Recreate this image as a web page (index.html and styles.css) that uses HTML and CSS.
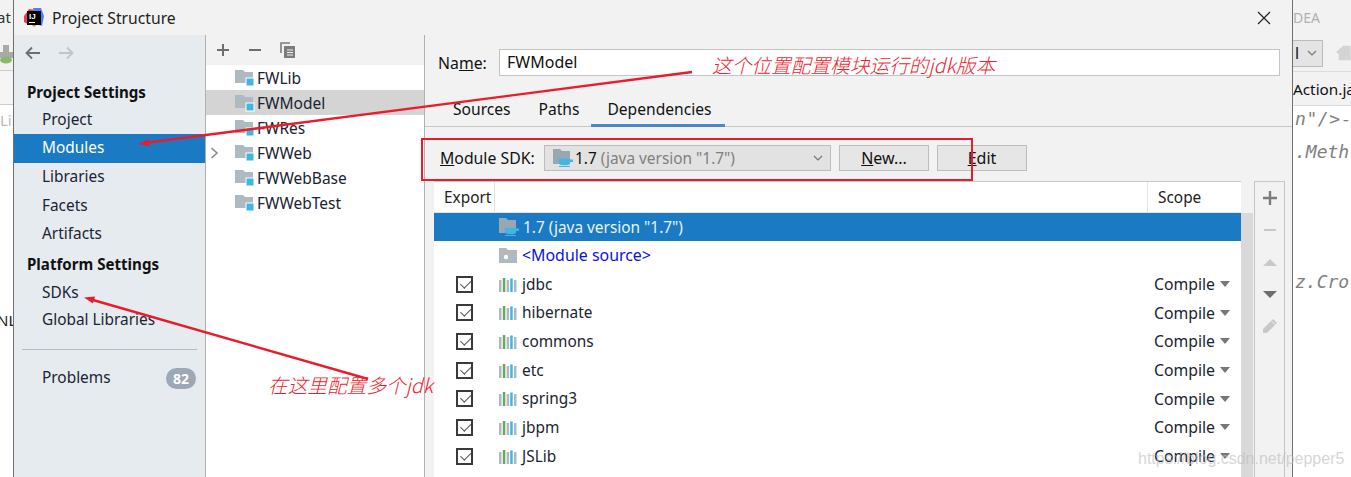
FILE: index.html
```html
<!DOCTYPE html>
<html lang="en">
<head>
<meta charset="utf-8">
<title>Project Structure</title>
<link rel="stylesheet" href="styles.css">
</head>
<body>
<svg class="defs" width="0" height="0">
  <symbol id="module" viewBox="0 0 20 18"><path d="M0 1h8l2 2h8v11H0z" fill="#aeb9c0"/><rect x="11" y="9" width="8" height="8" fill="#40b6e0" stroke="#fff"/></symbol>
  <symbol id="sdk" viewBox="0 0 20 18"><path d="M0 0h7l2 2h8v13H0z" fill="#9aa7b0"/><path d="M6 10h11v3a3 3 0 0 1-3 3h-5a3 3 0 0 1-3-3z" fill="#40b6e0" stroke="#40b6e0" stroke-width=".5"/><path d="M17 10.500h3v2.500h-3z" fill="#40b6e0"/><path d="M6 17.500h11" stroke="#40b6e0"/></symbol>
  <symbol id="src" viewBox="0 0 18 15"><path d="M0 0h7l2 2h9v13H0z" fill="#aeb9c0"/><circle cx="7" cy="9" r="2.200" fill="#fff"/></symbol>
  <symbol id="lib" viewBox="0 0 18 15"><path d="M0 3h2.500v12H0z" fill="#aeb9c0"/><path d="M3.800 1h2.500v14H3.800z" fill="#6ba65f"/><path d="M7.600 3h2.500v12H7.600z" fill="#aeb9c0"/><path d="M11.200 1.500h2.500V15h-2.500z" fill="#40b6e0"/><path d="M15 3h2.500v12H15z" fill="#aeb9c0"/></symbol>
</svg>

<div class="screen">
  <aside class="bg bg-left">
    <div class="bg-title">at</div>
    <div class="bg-tool">
      <svg width="13" height="22" viewBox="0 0 13 22"><path d="M3 2h6v7h4v6H0V9h3z" fill="#a9a9a9"/><ellipse cx="6" cy="17" rx="6" ry="3.500" fill="#8bb96a"/></svg>
    </div>
    <div class="bg-tabs"></div>
    <div class="bg-lib">Lib</div>
    <div class="bg-nl">NL</div>
  </aside>

  <section class="dialog">
    <header class="titlebar">
      <svg class="logo" width="20" height="20" viewBox="0 0 20 20">
        <path d="M0 8 5 1l7 1-3 8-4 7-5-3z" fill="#f0384f"/>
        <path d="M9 0h8l3 8-2 10-6-2z" fill="#4f7ff0"/>
        <path d="M2 12l8 7 4-3z" fill="#f28a30"/>
        <rect x="3" y="3" width="14" height="14" fill="#000"/>
        <rect x="5" y="14" width="6" height="1" fill="#fff"/>
        <text x="5" y="11" class="logo-text">IJ</text>
      </svg>
      <span class="title">Project Structure</span>
      <svg class="close" width="14" height="14" viewBox="0 0 14 14"><path d="M1 1l12 12M13 1 1 13" stroke="#222" stroke-width="1.200"/></svg>
    </header>

    <div class="body">
      <nav class="sidebar">
        <div class="nav-arrows">
          <svg width="16" height="14" viewBox="0 0 16 14"><path d="M15 7H2M7 1.500 1.500 7 7 12.500" fill="none" stroke="#6e6e6e" stroke-width="1.800"/></svg>
          <svg width="16" height="14" viewBox="0 0 16 14"><path d="M1 7h13M9 1.500 14.500 7 9 12.500" fill="none" stroke="#c4c4c4" stroke-width="1.800"/></svg>
        </div>
        <div class="nav-head">Project Settings</div>
        <div class="nav-item">Project</div>
        <div class="nav-item active">Modules</div>
        <div class="nav-item">Libraries</div>
        <div class="nav-item">Facets</div>
        <div class="nav-item">Artifacts</div>
        <div class="nav-head second">Platform Settings</div>
        <div class="nav-item">SDKs</div>
        <div class="nav-item tight">Global Libraries</div>
        <div class="nav-sep"></div>
        <div class="nav-item problems">Problems<span class="badge">82</span></div>
      </nav>

      <div class="modules">
        <div class="mod-tools">
          <svg width="14" height="14" viewBox="0 0 14 14"><path d="M7 1v12M1 7h12" stroke="#6e6e6e" stroke-width="2"/></svg>
          <svg width="14" height="14" viewBox="0 0 14 14"><path d="M1 7h12" stroke="#6e6e6e" stroke-width="2"/></svg>
          <svg width="16" height="17" viewBox="0 0 16 17"><path d="M1 11V1h9" fill="none" stroke="#7c7c7c" stroke-width="1.600"/><path d="M4 4h11v12H4z" fill="#7c7c7c"/><path d="M7 8h6M7 10.500h6M7 13h6" stroke="#f2f2f2"/></svg>
        </div>
        <ul class="mod-list">
          <li class="mod"><svg class="mod-ic" width="20" height="18"><use href="#module"/></svg>FWLib</li>
          <li class="mod selected"><svg class="mod-ic" width="20" height="18"><use href="#module"/></svg>FWModel</li>
          <li class="mod"><svg class="mod-ic" width="20" height="18"><use href="#module"/></svg>FWRes</li>
          <li class="mod"><svg class="chev" width="9" height="12" viewBox="0 0 9 12"><path d="M1.500 1 7 6l-5.500 5" fill="none" stroke="#8a8a8a" stroke-width="1.600"/></svg><svg class="mod-ic" width="20" height="18"><use href="#module"/></svg>FWWeb</li>
          <li class="mod"><svg class="mod-ic" width="20" height="18"><use href="#module"/></svg>FWWebBase</li>
          <li class="mod"><svg class="mod-ic" width="20" height="18"><use href="#module"/></svg>FWWebTest</li>
        </ul>
      </div>

      <main class="main">
        <div class="name-row">
          <label class="name-label">Na<u>m</u>e:</label>
          <div class="name-input">FWModel</div>
        </div>
        <div class="tabs">
          <span class="tab">Sources</span>
          <span class="tab">Paths</span>
          <span class="tab current">Dependencies</span>
        </div>
        <div class="sdk-row">
          <span class="sdk-label"><u>M</u>odule SDK:</span>
          <div class="combo">
            <svg width="20" height="18"><use href="#sdk"/></svg>
            <span>1.7 <span class="muted">(java version "1.7")</span></span>
            <svg class="combo-arrow" width="10" height="6" viewBox="0 0 10 6"><path d="M1 1l4 4 4-4" fill="none" stroke="#777" stroke-width="1.200"/></svg>
          </div>
          <button class="btn"><u>N</u>ew...</button>
          <button class="btn"><u>E</u>dit</button>
        </div>
        <div class="table-wrap">
          <div class="table">
            <div class="thead">
              <span class="th-export">Export</span>
              <span class="th-scope">Scope</span>
            </div>
            <div class="rows">
              <div class="row sel"><span class="check-cell"></span><svg class="row-ic" width="20" height="18"><use href="#sdk"/></svg>1.7 (java version "1.7")</div>
              <div class="row source"><span class="check-cell"></span><svg class="row-ic small" width="18" height="15"><use href="#src"/></svg>&lt;Module source&gt;</div>
              <div class="row"><span class="check-cell"><span class="check"></span></span><svg class="row-ic small" width="18" height="15"><use href="#lib"/></svg><span class="dep">jdbc</span><span class="scope">Compile</span><i class="tri"></i></div>
              <div class="row"><span class="check-cell"><span class="check"></span></span><svg class="row-ic small" width="18" height="15"><use href="#lib"/></svg><span class="dep">hibernate</span><span class="scope">Compile</span><i class="tri"></i></div>
              <div class="row"><span class="check-cell"><span class="check"></span></span><svg class="row-ic small" width="18" height="15"><use href="#lib"/></svg><span class="dep">commons</span><span class="scope">Compile</span><i class="tri"></i></div>
              <div class="row"><span class="check-cell"><span class="check"></span></span><svg class="row-ic small" width="18" height="15"><use href="#lib"/></svg><span class="dep">etc</span><span class="scope">Compile</span><i class="tri"></i></div>
              <div class="row"><span class="check-cell"><span class="check"></span></span><svg class="row-ic small" width="18" height="15"><use href="#lib"/></svg><span class="dep">spring3</span><span class="scope">Compile</span><i class="tri"></i></div>
              <div class="row"><span class="check-cell"><span class="check"></span></span><svg class="row-ic small" width="18" height="15"><use href="#lib"/></svg><span class="dep">jbpm</span><span class="scope">Compile</span><i class="tri"></i></div>
              <div class="row"><span class="check-cell"><span class="check"></span></span><svg class="row-ic small" width="18" height="15"><use href="#lib"/></svg><span class="dep">JSLib</span><span class="scope">Compile</span><i class="tri"></i></div>
            </div>
          </div>
          <div class="scrollbar"><div class="thumb"></div></div>
          <div class="side-tools">
            <svg width="16" height="16" viewBox="0 0 16 16"><path d="M8 1v14M1 8h14" stroke="#7c7c7c" stroke-width="2.400"/></svg>
            <svg width="16" height="16" viewBox="0 0 16 16"><path d="M2 8h12" stroke="#c8c8c8" stroke-width="2"/></svg>
            <svg width="16" height="16" viewBox="0 0 16 16"><path d="M1 12 8 5l7 7z" fill="#c8c8c8"/></svg>
            <svg width="16" height="16" viewBox="0 0 16 16"><path d="M1 5h14l-7 7z" fill="#6e6e6e"/></svg>
            <svg width="16" height="16" viewBox="0 0 16 16"><path d="M1 15v-4L11 1l4 4L5 15z" fill="#c8c8c8"/><path d="M9.500 3l4 4" stroke="#f2f2f2"/></svg>
          </div>
        </div>
      </main>
    </div>
  </section>

  <aside class="bg bg-right">
    <div class="bg-idea">DEA</div>
    <div class="bg-combo-row">
      <div class="bg-combo"><span>l</span><svg width="10" height="6" viewBox="0 0 10 6"><path d="M1 1l4 4 4-4" fill="none" stroke="#777" stroke-width="1.200"/></svg></div>
      <svg width="16" height="18" viewBox="0 0 16 18"><path d="M0 8 8 1h8v16H3V10z" fill="#d4d4d4"/></svg>
    </div>
    <div class="bg-tab">Action.ja</div>
    <div class="bg-code c1">n"/&gt;-</div>
    <div class="bg-code c2">.Meth</div>
    <div class="bg-code c3">z.Cro</div>
  </aside>

  <svg class="annot" width="1351" height="477" viewBox="0 0 1351 477">
    <rect x="422" y="139" width="550" height="41" fill="none" stroke="#ea1c2c" stroke-width="2"/>
    <path d="M692 72 148 142.500" stroke="#ea1c2c" stroke-width="2.400"/>
    <path d="M138 144l11-5 .8 7z" fill="#ea1c2c"/>
    <path d="M368 379 93 300" stroke="#ea1c2c" stroke-width="2.400"/>
    <path d="M84 297.500l11-1-2 7z" fill="#ea1c2c"/>
  </svg>
  <div class="note note-a">这个位置配置模块运行的jdk版本</div>
  <div class="note note-b">在这里配置多个jdk</div>
  <div class="watermark">https://blog.csdn.net/pepper5</div>
</div>
</body>
</html>
```
FILE: styles.css
```css
* { box-sizing: border-box; }
html, body { margin: 0; padding: 0; }
body {
  width: 1351px;
  height: 477px;
  overflow: hidden;
  background: #fff;
  font-family: "Noto Sans", "Open Sans", sans-serif;
  font-size: 15.800px;
  color: #111;
}
.defs { position: absolute; }
.screen {
  position: relative;
  display: flex;
  width: 1351px;
  height: 477px;
  overflow: hidden;
}

/* Windows behind the dialog */
.bg { overflow: hidden; background: #fff; white-space: nowrap; }
.bg-left { width: 13px; flex: none; font-size: 15px; }
.bg-title { height: 35px; background: #f2f2f2; line-height: 34px; text-indent: -3px; color: #333; }
.bg-tool { height: 36px; background: #f2f2f2; border-bottom: 1px solid #ccc; padding-top: 8px; }
.bg-tool svg { display: block; }
.bg-tabs { height: 34px; background: #f5f5f5; border-bottom: 1px solid #ccc; }
.bg-lib { height: 35px; color: #bbb; line-height: 30px; }
.bg-nl { margin-top: 170px; color: #222; text-indent: -3px; line-height: 20px; }

.bg-right { width: 58px; flex: none; }
.bg-idea { height: 35px; background: #f2f2f2; color: #b0b0b0; font-size: 14px; line-height: 36px; }
.bg-combo-row { height: 37px; background: #f2f2f2; border-bottom: 1px solid #ddd; display: flex; align-items: center; gap: 13px; }
.bg-combo { width: 33px; height: 27px; background: #e4e4e4; border: 1px solid #bbb; border-left: 0; display: flex; align-items: center; gap: 8px; padding-left: 2px; }
.bg-tab { height: 34px; background: #f2f2f2; border-bottom: 1px solid #ddd; line-height: 34px; font-size: 15.300px; }
.bg-code { font-family: "DejaVu Sans Mono", monospace; font-style: italic; color: #808080; font-size: 18px; line-height: 24px; padding-left: 2px; }
.c1 { margin-top: 1px; letter-spacing: .6px; }
.c2 { margin-top: 9px; }
.c3 { margin-top: 106px; }

/* Dialog */
.dialog {
  width: 1280px;
  flex: none;
  display: flex;
  flex-direction: column;
  background: #f2f2f2;
  border-left: 1px solid #6f6f6f;
  border-right: 1px solid #6f6f6f;
}
.titlebar { height: 35px; flex: none; display: flex; align-items: center; padding-left: 10px; }
.logo { flex: none; }
.logo-text { font-size: 8px; font-weight: 700; fill: #fff; font-family: "Liberation Sans", sans-serif; }
.title { margin-left: 8px; font-size: 15.700px; color: #222; }
.close { margin-left: auto; margin-right: 21px; }
.body { flex: 1; display: flex; min-height: 0; }

.sidebar {
  width: 192px;
  flex: none;
  background: #e6ebf0;
  border-right: 1px solid #b0b0b0;
  font-size: 15.400px;
}
.nav-arrows { height: 35px; display: flex; align-items: center; gap: 17px; padding: 0 0 0 11px; margin-bottom: 8px; }
.nav-head { height: 28px; line-height: 28px; padding-left: 13px; font-weight: 700; font-size: 15.100px; color: #111; }
.nav-head.second { margin-top: 1px; height: 29px; }
.nav-item { height: 28.700px; line-height: 28px; padding-left: 28px; color: #1a2330; }
.nav-head + .nav-item { height: 28px; }
.nav-item.tight { height: 27px; line-height: 25px; }
.nav-item.active { height: 29px; background: #1a7bc4; color: #fff; }
.nav-sep { height: 1px; margin: 15px 8px 14px 8px; background: #b8bcc0; }
.problems { display: flex; justify-content: space-between; align-items: center; padding-right: 9px; }
.badge { width: 30px; height: 21px; border-radius: 11px; background: #9ca8b5; color: #fff; font-weight: 700; font-size: 14px; line-height: 21px; text-align: center; }

.modules { width: 219px; flex: none; display: flex; flex-direction: column; background: #fff; border-right: 1px solid #b0b0b0; font-size: 15.500px; }
.mod-tools { height: 30px; flex: none; background: #f2f2f2; display: flex; align-items: center; padding: 0 0 0 10px; gap: 18px; }
.mod-list { list-style: none; margin: 0; padding: 0; }
.mod { position: relative; height: 25px; line-height: 24px; padding-left: 29px; display: flex; align-items: center; color: #1a2330; }
.mod.selected { background: #d4d4d4; }
.mod-ic { margin-right: 2px; flex: none; }
.chev { position: absolute; left: 4px; top: 7px; }

.main { flex: 1; min-width: 0; display: flex; flex-direction: column; }
.name-row { height: 41px; flex: none; display: flex; align-items: center; padding: 14px 12px 0 13px; margin-bottom: 21px; }
.name-label { width: 61px; flex: none; }
.name-input { flex: 1; height: 27px; background: #fff; border: 1px solid #c4c4c4; font-size: 16px; line-height: 24px; padding-left: 7px; }
.tabs { height: 31px; flex: none; display: flex; border-bottom: 1px solid #c8c8c8; padding-left: 14px; margin-top: -1px; }
.tab { padding: 0 14px; line-height: 26px; height: 31px; font-size: 15.600px; }
.tab.current { border-bottom: 3px solid #4a88c7; padding: 0 14px 0 16px; margin-left: -2px; }
.sdk-row { height: 54px; flex: none; display: flex; align-items: center; padding: 8px 0 0 15px; }
.sdk-label { width: 104px; flex: none; }
.combo { width: 287px; height: 26px; flex: none; display: flex; align-items: center; gap: 2px; background: #e2e2e2; border: 1px solid #bdbdbd; padding-left: 8px; font-size: 15.400px; }
.muted { color: #808080; }
.combo-arrow { margin-left: auto; margin-right: 7px; }
.btn { font: inherit; font-size: 16px; color: #111; width: 90px; height: 26px; flex: none; margin-left: 8px; background: #e6e6e6; border: 1px solid #bdbdbd; padding: 0; line-height: 22px; }

.table-wrap { flex: 1; min-height: 0; margin: 0 7px 0 9px; display: flex; border-right: 1px solid #c4c4c4; overflow: hidden; }
.table { width: 807px; flex: none; background: #fff; border-top: 1px solid #c8c8c8; font-size: 15.400px; }
.thead { height: 31px; display: flex; align-items: center; border-bottom: 1px solid #e4e4e4; color: #222; }
.th-export { width: 61px; height: 100%; padding-left: 10px; line-height: 31px; border-right: 1px solid #e4e4e4; }
.th-scope { margin-left: auto; width: 94px; height: 100%; padding-left: 10px; line-height: 31px; border-left: 1px solid #e4e4e4; }
.row { height: 28.700px; display: flex; align-items: center; color: #1a2330; }
.row.sel { height: 28px; background: #1a7bc4; color: #e8f2fa; }
.row.source { color: #0a10e8; font-size: 15.900px; }
.check-cell { width: 65px; flex: none; display: flex; justify-content: flex-start; padding-left: 22px; }
.check { position: relative; display: block; width: 17px; height: 17px; border: 2px solid #3a3a3a; background: #fff; }
.check::after { content: ""; position: absolute; left: 2px; top: 0; width: 9px; height: 5px; border-left: 1.500px solid #555; border-bottom: 1.500px solid #555; transform: rotate(-45deg) translate(-1px, 2px); }
.row-ic { flex: none; margin-right: 4px; }
.row-ic.small { margin-right: 5px; }
.dep { flex: 1; }
.scope { font-size: 15.800px; margin-right: 5px; }
.tri { width: 0; height: 0; margin-right: 11px; border-left: 5.500px solid transparent; border-right: 5.500px solid transparent; border-top: 6px solid #777; }

.scrollbar { width: 12px; flex: none; padding-top: 32px; }
.thumb { height: 100%; background: #d9d9d9; }
.side-tools { flex: 1; display: flex; flex-direction: column; align-items: center; border-left: 1px solid #c4c4c4; border-top: 1px solid #c8c8c8; padding-top: 8px; gap: 16px; margin-left: 1px; }
.side-tools svg { flex: none; }

/* Annotations drawn over the screenshot */
.annot { position: absolute; left: 0; top: 0; pointer-events: none; }
.note { position: absolute; font-family: "Noto Sans CJK SC", sans-serif; font-style: italic; font-size: 19.700px; font-weight: 300; line-height: 28px; color: #f01e2e; white-space: nowrap; }
.note-a { left: 712px; top: 51px; }
.note-b { left: 268px; top: 371px; }
.watermark { position: absolute; left: 1138px; top: 449px; font-family: "Liberation Sans", sans-serif; font-size: 16px; line-height: 20px; color: rgba(190, 190, 190, .65); white-space: nowrap; }
```
